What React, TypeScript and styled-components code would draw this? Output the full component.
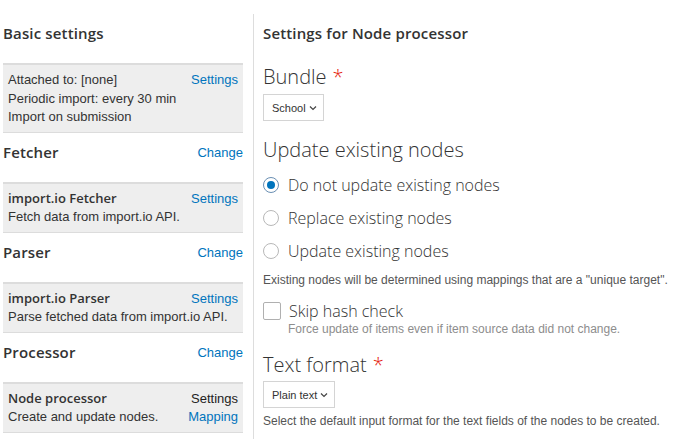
import styled, { createGlobalStyle } from 'styled-components'

const GlobalStyle = createGlobalStyle`
  html, body {
    margin: 0;
    padding: 0;
    background: #ffffff;
  }
  body {
    font-family: "Liberation Sans", Arial, sans-serif;
    color: #333333;
  }
`

const Page = styled.div`
  display: flex;
  align-items: stretch;
  padding: 14px 0 0 3px;
  height: 439px;
  box-sizing: border-box;
  overflow: hidden;
`

const Sidebar = styled.div`
  width: 240px;
  flex-shrink: 0;
  margin-right: 10px;
`

const Main = styled.div`
  flex: 1;
  border-left: 1px solid #dddddd;
  padding-left: 9px;
  min-height: 100%;
`

const HeadingRow = styled.div`
  display: flex;
  justify-content: space-between;
  align-items: center;
  padding: 10px 0 20px;
  height: 19px;
`

const Heading = styled.h2`
  margin: 0;
  font-family: "Open Sans", sans-serif;
  font-weight: 600;
  font-size: 15px;
  line-height: 19px;
  color: #333333;
  letter-spacing: 0.15px;
`

const Link = styled.a`
  color: #0074bd;
  text-decoration: none;
  font-size: 13px;
  cursor: pointer;
`

const Plain = styled.span`
  color: #222222;
  font-size: 13px;
`

const Box = styled.div<{ $lines: number }>`
  background: #eeeeee;
  border-top: 2px solid #dcdcdc;
  border-bottom: 1px solid #dcdcdc;
  padding: ${p => (p.$lines > 2 ? '6px 5px 5.5px' : '5px 5px 6px')};
  font-size: 13px;
  line-height: ${p => (p.$lines > 2 ? '18.5px' : '18px')};
`

const BoxRow = styled.div`
  display: flex;
  justify-content: space-between;
  align-items: baseline;
  white-space: nowrap;
`

const Title = styled.span`
  font-family: "Open Sans", sans-serif;
  font-weight: 600;
  font-size: 13px;
  color: #333333;
`

const FieldLabel = styled.div<{ $top: number }>`
  margin-top: ${p => p.$top}px;
  font-family: "Open Sans", sans-serif;
  font-weight: 300;
  font-size: 20px;
  line-height: 28px;
  color: #333333;
`

const Required = styled.span`
  color: #e51c0c;
  margin-left: 6px;
`

const Select = styled.div<{ $top: number }>`
  display: inline-flex;
  align-items: center;
  gap: 3px;
  margin-top: ${p => p.$top}px;
  height: 25px;
  padding: 0 6px 0 8px;
  border: 1px solid #d4d4d4;
  font-size: 11px;
  color: #333333;
`

const RadioList = styled.div`
  margin-top: 4px;
`

const RadioRow = styled.label`
  display: flex;
  align-items: center;
  height: 33px;
  gap: 9px;
  font-family: "Open Sans", sans-serif;
  font-weight: 300;
  font-size: 16px;
  color: #333333;
`

const RadioDot = styled.span<{ $checked?: boolean }>`
  width: 14px;
  height: 14px;
  border-radius: 50%;
  border: 1px solid ${p => (p.$checked ? '#6a8fb3' : '#b8b8b8')};
  display: flex;
  align-items: center;
  justify-content: center;
  background: #fff;
  &::after {
    content: '';
    width: 8px;
    height: 8px;
    border-radius: 50%;
    background: ${p => (p.$checked ? '#0074bd' : 'transparent')};
  }
`

const Checkbox = styled.span`
  width: 16px;
  height: 16px;
  border: 1px solid #b0b0b0;
  border-radius: 2px;
  background: #fff;
`

const CheckRow = styled.label`
  display: flex;
  align-items: center;
  gap: 8px;
  margin-top: 13px;
  height: 22px;
  font-family: "Open Sans", sans-serif;
  font-weight: 300;
  font-size: 16px;
  color: #333333;
`

const Description = styled.div<{ $top: number; $indent?: boolean; $light?: boolean }>`
  margin-top: ${p => p.$top}px;
  padding-left: ${p => (p.$indent ? '25px' : '0')};
  font-size: 12px;
  line-height: 14px;
  color: ${p => (p.$light ? '#8d8d8d' : '#555555')};
`

const Chevron = () => (
  <svg width="8" height="6" viewBox="0 0 8 6">
    <polyline points="1,1.5 4,4.5 7,1.5" fill="none" stroke="#444" strokeWidth="1.2" />
  </svg>
)

const plugins = [
  {
    name: 'Fetcher',
    title: 'import.io Fetcher',
    desc: 'Fetch data from import.io API.',
  },
  {
    name: 'Parser',
    title: 'import.io Parser',
    desc: 'Parse fetched data from import.io API.',
  },
]

const App = () => {
  return (
    <>
      <GlobalStyle />
      <Page>
        <Sidebar>
          <HeadingRow>
            <Heading>Basic settings</Heading>
          </HeadingRow>
          <Box $lines={3}>
            <BoxRow>
              <span>Attached to: [none]</span>
              <Link>Settings</Link>
            </BoxRow>
            <BoxRow>
              <span>Periodic import: every 30 min</span>
            </BoxRow>
            <BoxRow>
              <span>Import on submission</span>
            </BoxRow>
          </Box>

          {plugins.map(p => (
            <div key={p.name}>
              <HeadingRow>
                <Heading>{p.name}</Heading>
                <Link>Change</Link>
              </HeadingRow>
              <Box $lines={2}>
                <BoxRow>
                  <Title>{p.title}</Title>
                  <Link>Settings</Link>
                </BoxRow>
                <BoxRow>
                  <span>{p.desc}</span>
                </BoxRow>
              </Box>
            </div>
          ))}

          <HeadingRow>
            <Heading>Processor</Heading>
            <Link>Change</Link>
          </HeadingRow>
          <Box $lines={2}>
            <BoxRow>
              <Title>Node processor</Title>
              <Plain>Settings</Plain>
            </BoxRow>
            <BoxRow>
              <span>Create and update nodes.</span>
              <Link>Mapping</Link>
            </BoxRow>
          </Box>
        </Sidebar>

        <Main>
          <HeadingRow>
            <Heading>Settings for Node processor</Heading>
          </HeadingRow>

          <FieldLabel $top={0}>
            Bundle<Required>*</Required>
          </FieldLabel>
          <Select $top={3}>
            School <Chevron />
          </Select>

          <FieldLabel $top={15}>Update existing nodes</FieldLabel>
          <RadioList>
            <RadioRow>
              <RadioDot $checked />
              Do not update existing nodes
            </RadioRow>
            <RadioRow>
              <RadioDot />
              Replace existing nodes
            </RadioRow>
            <RadioRow>
              <RadioDot />
              Update existing nodes
            </RadioRow>
          </RadioList>
          <Description $top={6}>
            Existing nodes will be determined using mappings that are a "unique target".
          </Description>

          <CheckRow>
            <Checkbox />
            Skip hash check
          </CheckRow>
          <Description $top={0} $indent $light>
            Force update of items even if item source data did not change.
          </Description>

          <FieldLabel $top={15}>
            Text format<Required>*</Required>
          </FieldLabel>
          <Select $top={2}>
            Plain text <Chevron />
          </Select>
          <Description $top={6}>
            Select the default input format for the text fields of the nodes to be created.
          </Description>
        </Main>
      </Page>
    </>
  )
}

export default App
